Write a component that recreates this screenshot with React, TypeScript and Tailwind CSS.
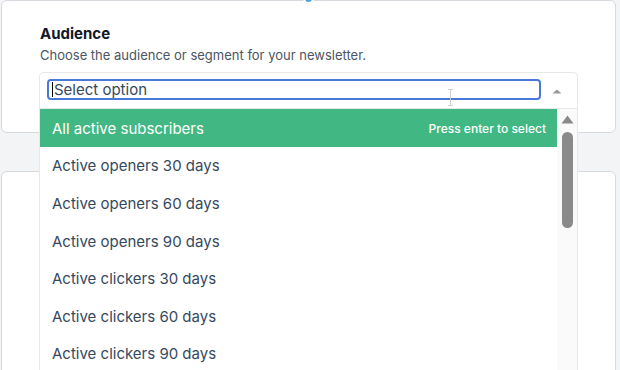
const options = [
  'All active subscribers',
  'Active openers 30 days',
  'Active openers 60 days',
  'Active openers 90 days',
  'Active clickers 30 days',
  'Active clickers 60 days',
  'Active clickers 90 days',
];

function AudienceSelect() {
  return (
    <div className="relative -ml-[1px] w-[539px]">
      {/* input row */}
      <div className="relative h-[36px] rounded-t-[5px] border border-b-0 border-[#e8e8e8] bg-white pl-[7px] pr-[36px] pt-[6px]">
        <div className="flex h-[21px] items-center rounded-[4px] border-2 border-[#4a78d8] pl-[3px]">
          <span className="h-[15px] w-[1px] bg-black" />
          <span className="ml-[1px] text-[15px] leading-[17px] text-[#35495e]">Select option</span>
        </div>
        <svg className="absolute right-[15px] top-[16px]" width="10" height="5" viewBox="0 0 10 5">
          <path d="M0.5 4.5 L5 0.5 L9.5 4.5 Z" fill="#999" />
        </svg>
        {/* mouse pointer */}
        <svg className="absolute left-[406px] top-[16px]" width="9" height="17" viewBox="0 0 9 17">
          <path d="M2 0.5 H7 M4.5 0.5 V16.5 M2 16.5 H7" stroke="#cfcfcf" strokeWidth="1" fill="none" />
        </svg>
      </div>

      {/* options list */}
      <div className="absolute left-0 top-full z-10 flex h-[300px] w-full overflow-hidden border border-[#e8e8e8] bg-white">
        <ul className="flex-1">
          {options.map((o, i) => (
            <li
              key={o}
              className={
                i === 0
                  ? 'flex h-[37.6px] items-center justify-between bg-[#41b883] pl-[12px] pr-[11px] pt-[2px] text-white'
                  : 'flex h-[37.6px] items-center pl-[12px] pt-[2px] text-[#35495e]'
              }
            >
              <span className="text-[15px] leading-[20px]">{o}</span>
              {i === 0 && <span className="text-[12px] font-medium leading-[16px]">Press enter to select</span>}
            </li>
          ))}
        </ul>
        <div className="flex w-[20px] flex-col items-center bg-[#fafafa] pt-[6px]">
          <svg width="13" height="9" viewBox="0 0 13 9">
            <path d="M0.5 8.5 L6.5 0.5 L12.5 8.5 Z" fill="#8a8a8a" />
          </svg>
          <div className="mt-[8px] h-[96px] w-[11px] rounded-full bg-[#8a8a8a]" />
        </div>
      </div>
    </div>
  );
}

export default function App() {
  return (
    <div className="relative h-[370px] w-[620px] overflow-hidden bg-[#f3f4f6] font-['Inter',sans-serif]">
      <div className="flex flex-col gap-[38px] pl-[1px]">
        <div className="relative h-[133px] w-[615px] rounded-[6px] border border-[#d6d9de] bg-white pl-[38px] pt-[23px]">
          <span className="absolute left-[301px] top-[-8px] h-[11px] w-[11px] rounded-full border-2 border-white bg-[#4aa3df]" />
          <h3 className="text-[15px] font-bold leading-[20px] text-[#111827]">Audience</h3>
          <p className="mt-[1px] text-[13px] leading-[20px] text-[#4b5563]">
            Choose the audience or segment for your newsletter.
          </p>
          <div className="mt-[7px]">
            <AudienceSelect />
          </div>
        </div>
        <div className="h-[260px] w-[615px] rounded-[6px] border border-[#d6d9de] bg-white" />
      </div>
    </div>
  );
}
